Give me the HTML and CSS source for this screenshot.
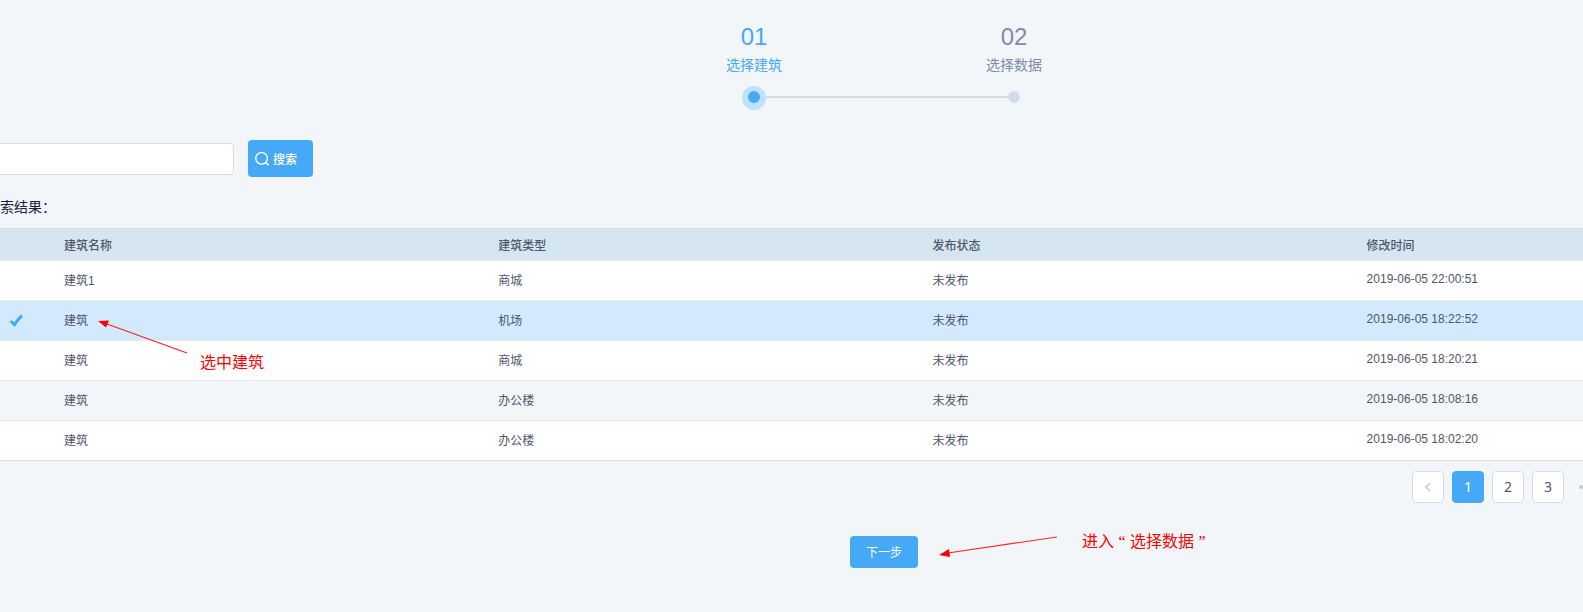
FILE: index.html
```html
<!DOCTYPE html>
<html lang="zh-CN">
<head>
<meta charset="utf-8">
<title>选择建筑</title>
<link rel="stylesheet" href="styles.css">
</head>
<body>
<main class="page">
  <ol class="steps">
    <li class="step step-active">
      <span class="step-number">01</span>
      <span class="step-title">选择建筑</span>
      <span class="step-track"><span class="step-dot"></span></span>
    </li>
    <li class="step">
      <span class="step-number">02</span>
      <span class="step-title">选择数据</span>
      <span class="step-track"><span class="step-dot"></span></span>
    </li>
  </ol>

  <form class="search">
    <input class="search-input" type="text" aria-label="搜索">
    <button class="btn search-btn" type="button">
      <svg class="search-icon" viewBox="0 0 14 14" aria-hidden="true"><circle cx="6.6" cy="6.3" r="5.8"/><path d="M10.7 10.4 13.6 13.2"/></svg>
      <span>搜索</span>
    </button>
  </form>

  <h2 class="result-title">索结果：</h2>

  <table class="table">
    <colgroup><col class="col-check"><col class="col-data"><col class="col-data"><col class="col-data"><col></colgroup>
    <thead>
      <tr><th></th><th>建筑名称</th><th>建筑类型</th><th>发布状态</th><th>修改时间</th></tr>
    </thead>
    <tbody>
      <tr><td></td><td>建筑1</td><td>商城</td><td>未发布</td><td>2019-06-05 22:00:51</td></tr>
      <tr class="selected">
        <td><svg class="check" viewBox="0 0 14 13" aria-hidden="true"><path d="M0.3 7.2 3.2 6.4 5.4 8.6C6.8 5.4 9.6 2 13.2 0.2L13.2 3.8C10.4 6.2 8 9.4 6 12.6L5 12.6Z"/></svg></td>
        <td>建筑</td><td>机场</td><td>未发布</td><td>2019-06-05 18:22:52</td>
      </tr>
      <tr><td></td><td>建筑</td><td>商城</td><td>未发布</td><td>2019-06-05 18:20:21</td></tr>
      <tr class="striped"><td></td><td>建筑</td><td>办公楼</td><td>未发布</td><td>2019-06-05 18:08:16</td></tr>
      <tr><td></td><td>建筑</td><td>办公楼</td><td>未发布</td><td>2019-06-05 18:02:20</td></tr>
    </tbody>
  </table>

  <nav class="pager" aria-label="分页">
    <button class="page-btn" type="button" aria-label="上一页"><svg class="chevron" viewBox="0 0 6 10" aria-hidden="true"><path d="M5 1 1 5 5 9"/></svg></button>
    <button class="page-btn current" type="button">1</button>
    <button class="page-btn" type="button">2</button>
    <button class="page-btn" type="button">3</button>
    <span class="more"><svg class="more-icon" viewBox="0 0 16 4" aria-hidden="true"><circle cx="2" cy="2" r="1.9"/><circle cx="8" cy="2" r="1.9"/><circle cx="14" cy="2" r="1.9"/></svg></span>
  </nav>

  <div class="actions"><button class="btn next-btn" type="button">下一步</button></div>

  <svg class="arrow arrow-select" viewBox="0 0 90 34" aria-hidden="true"><path class="arrow-line" d="M9 4 89 33"/><path class="arrow-head" d="M0 1 11 0.5 8 7.5Z"/></svg>
  <span class="note note-select">选中建筑</span>
  <svg class="arrow arrow-next" viewBox="0 0 119 22" aria-hidden="true"><path class="arrow-line" d="M9 17 118 1"/><path class="arrow-head" d="M0 19 10 13 11 21Z"/></svg>
  <span class="note note-next">进入<span class="quote">“</span>选择数据<span class="quote">”</span></span>
</main>
</body>
</html>
```

FILE: styles.css
```css
* {
  box-sizing: border-box;
}

body {
  margin: 0;
  background: #f2f6f9;
  color: #4e566b;
  font-family: "Liberation Sans", "Noto Sans CJK SC", sans-serif;
  font-size: 12px;
}

button,
input {
  font-family: inherit;
}

.page {
  position: relative;
  min-height: 100vh;
  overflow: hidden;
}

/* Steps */
.steps {
  display: flex;
  justify-content: center;
  margin: 0;
  padding: 22px 0 0 185px;
  list-style: none;
}

.step {
  display: flex;
  flex-direction: column;
  align-items: center;
  width: 260px;
  color: #7e8ab0;
}

.step-number {
  font-size: 24px;
  line-height: 30px;
}

.step-title {
  margin-top: 3px;
  font-size: 14px;
  line-height: 20px;
}

.step-track {
  display: flex;
  align-items: center;
  justify-content: center;
  width: 100%;
  height: 24px;
  margin-top: 10px;
  background: linear-gradient(#d3dcea, #d3dcea) left center / 50% 2px no-repeat;
}

.step-dot {
  width: 12px;
  height: 12px;
  border-radius: 50%;
  background: #d3dcea;
}

.step-active {
  color: #45a9f7;
}

.step-active .step-track {
  background-position: right center;
}

.step-active .step-dot {
  background: #45a9f7;
  box-shadow: 0 1px 0 6px #bee2fe;
}

/* Search */
.btn {
  border: 0;
  border-radius: 4px;
  background: #45a9f7;
  color: #fff;
  font-size: 12px;
}

.search {
  display: flex;
  align-items: center;
  gap: 14px;
  margin: 31px 0 0 -6px;
}

.search-input {
  width: 240px;
  height: 32px;
  border: 1px solid #d9dce2;
  border-radius: 4px;
  background: #fff;
}

.search-btn {
  display: flex;
  align-items: center;
  gap: 4px;
  width: 65px;
  height: 37px;
  padding: 0 7px;
  font-weight: 500;
}

.search-icon {
  width: 14px;
  height: 14px;
  fill: none;
  stroke: #fff;
  stroke-width: 1.4;
}

.result-title {
  margin: 20px 0 11px;
  color: #17233d;
  font-size: 14px;
  font-weight: 400;
  line-height: 20px;
}

/* Table */
.table {
  width: 100%;
  table-layout: fixed;
  border-collapse: separate;
  border-spacing: 0;
  border-top: 1px solid #d7dde4;
  border-bottom: 1px solid #d7dde4;
}

.col-check {
  width: 64px;
}

.col-data {
  width: 27.43%;
}

.table th,
.table td {
  padding: 0 0 3px;
  border-bottom: 1px solid #e6eaee;
  text-align: left;
  white-space: nowrap;
}

.table th {
  height: 32px;
  padding-bottom: 1px;
  background: #d6e6f0;
  font-weight: 500;
}

.table td {
  height: 40px;
  background: #fff;
}

.table tbody tr:last-child td {
  height: 39px;
  border-bottom: 0;
}

.table .selected td {
  background: #d2e9fe;
}

.table .selected td:first-child {
  padding-bottom: 0;
}

.table .striped td {
  background: #f2f6f9;
}

.check {
  display: block;
  width: 14px;
  height: 13px;
  margin-left: 9px;
  fill: #45a9f7;
}

/* Pager */
.pager {
  display: flex;
  justify-content: flex-end;
  gap: 8px;
  margin-top: 10px;
}

.page-btn {
  display: flex;
  align-items: center;
  justify-content: center;
  width: 32px;
  height: 32px;
  padding: 0 0 1px;
  border: 1px solid #d9dce2;
  border-radius: 4px;
  background: #fff;
  color: #4e566b;
  font-family: "Noto Sans", sans-serif;
  font-size: 14px;
}

.page-btn.current {
  border-color: #45a9f7;
  background: #45a9f7;
  color: #fff;
}

.chevron {
  width: 6px;
  height: 10px;
  fill: none;
  stroke: #c3c6cc;
  stroke-width: 1.4;
}

.more {
  display: flex;
  align-items: center;
  width: 11px;
  padding-left: 7px;
  overflow: hidden;
}

.more-icon {
  flex: none;
  width: 16px;
  height: 4px;
  fill: #c3c6cc;
}

/* Actions */
.actions {
  display: flex;
  justify-content: center;
  margin-top: 33px;
  padding-left: 185px;
}

.next-btn {
  width: 68px;
  height: 32px;
  padding: 0 0 2px;
}

/* Annotations laid over the page */
.arrow,
.note {
  position: absolute;
}

.arrow-line {
  fill: none;
  stroke: #f22;
  stroke-width: 1.2;
}

.arrow-head {
  fill: #f00;
}

.arrow-select {
  top: 320px;
  left: 98px;
  width: 90px;
  height: 34px;
}

.arrow-next {
  top: 536px;
  left: 939px;
  width: 119px;
  height: 22px;
}

.note {
  color: #f00;
  font-size: 16px;
  line-height: 24px;
  white-space: nowrap;
}

.note-select {
  top: 351px;
  left: 200px;
}

.note-next {
  top: 530px;
  left: 1082px;
}

.quote {
  display: inline-block;
  width: 16px;
  font-family: "Liberation Serif", serif;
  text-align: center;
}
```
